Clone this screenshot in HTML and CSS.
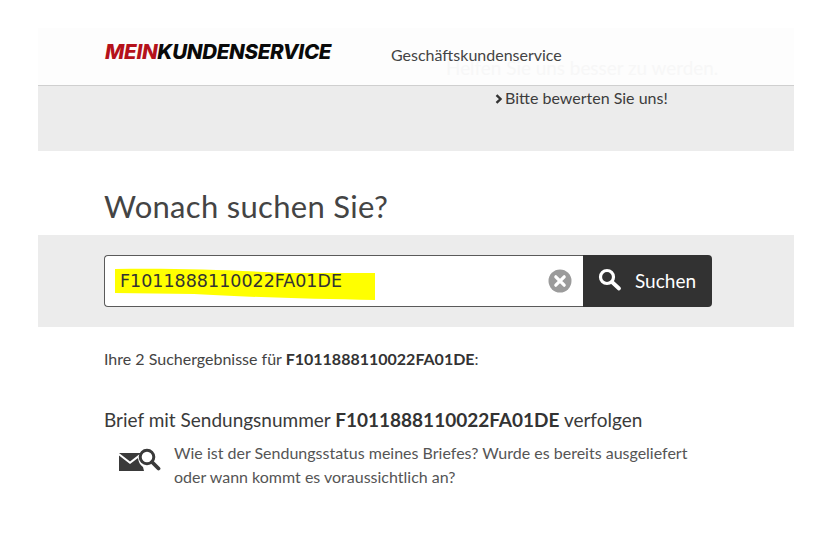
FILE: index.html
```html
<!DOCTYPE html>
<html lang="de">
<head>
<meta charset="utf-8">
<title>Mein Kundenservice</title>
<link rel="stylesheet" href="styles.css">
</head>
<body>
<div class="page">
  <header class="topbar">
    <div class="logo"><span class="logo-red">MEIN</span>KUNDENSERVICE</div>
    <a class="biz">Geschäftskundenservice</a>
    <span class="ghost">Helfen Sie uns besser zu werden.</span>
  </header>
  <section class="rate">
    <svg class="chev" width="8" height="10" viewBox="0 0 8 10"><path d="M1.5 1.200 L5.500 5 L1.500 8.800" fill="none" stroke="#333" stroke-width="2.400"/></svg>
    <span>Bitte bewerten Sie uns!</span>
  </section>
  <h1 class="title">Wonach suchen Sie?</h1>
  <section class="band">
    <div class="search">
      <div class="field">
        <svg class="marker" width="262" height="32" viewBox="0 0 262 32"><path d="M1 1 C60 0 120 2 170 5 L261 5 L261 32 C200 31 130 29 80 26 L1 25 Z" fill="#ffff00"/></svg>
        <span class="query">F1011888110022FA01DE</span>
        <svg class="clear" width="24" height="24" viewBox="0 0 24 24"><circle cx="12" cy="12" r="11.500" fill="#9b9b9b"/><path d="M7.800 7.800 L16.200 16.200 M16.200 7.800 L7.800 16.200" stroke="#fff" stroke-width="3.200" stroke-linecap="round"/></svg>
      </div>
      <div class="btn">
        <svg width="24" height="24" viewBox="0 0 24 24"><circle cx="9" cy="9" r="6.500" fill="none" stroke="#fff" stroke-width="3.200"/><path d="M14 14 L21 20.500" stroke="#fff" stroke-width="3.800" stroke-linecap="round"/></svg>
        <span>Suchen</span>
      </div>
    </div>
  </section>
  <main class="results">
    <p class="count">Ihre 2 Suchergebnisse für <b>F1011888110022FA01DE</b>:</p>
    <h2 class="res-title">Brief mit Sendungsnummer <b>F1011888110022FA01DE</b> verfolgen</h2>
    <div class="res-body">
      <svg class="res-icon" width="42" height="24" viewBox="0 0 42 24"><path d="M0 5 H22 L11 13.500 Z M0 7.500 L11 16 L19 10 C19.500 14 21 17 24 19 L25 23 H0 Z" fill="#3a3a3a"/><circle cx="28" cy="9" r="6.800" fill="none" stroke="#3a3a3a" stroke-width="3"/><path d="M33 14 L39.500 20.500" stroke="#3a3a3a" stroke-width="3.800" stroke-linecap="round"/></svg>
      <p class="res-text">Wie ist der Sendungsstatus meines Briefes? Wurde es bereits ausgeliefert<br>oder wann kommt es voraussichtlich an?</p>
    </div>
  </main>
</div>
</body>
</html>
```
FILE: styles.css
```css
* { box-sizing: border-box; }
html, body { margin: 0; padding: 0; background: #fff; overflow: hidden; }
body { font-family: "Lato", "Noto Sans", sans-serif; color: #3c3c3c; }
.page { width: 756px; margin-left: 38px; padding-top: 28px; }
.topbar { position: relative; height: 58px; border-bottom: 1px solid #cfcfcf; display: flex; padding-left: 67px; background: #fdfdfd; }
.logo { font-family: "Inter", "Roboto", sans-serif; font-weight: 800; font-style: italic; font-size: 20.500px; line-height: 26px; margin-top: 11px; color: #0a0a0a; letter-spacing: -0.3px; width: 286px; white-space: nowrap; }
.logo-red { color: #b5121b; }
.biz { font-size: 16px; line-height: 20px; margin-top: 17px; color: #444; }
.ghost { position: absolute; left: 408px; top: 28px; font-size: 18.900px; line-height: 24px; color: #f7f7f7; }
.rate { height: 65px; background: #ececec; padding: 1px 0 0 457px; display: flex; align-items: flex-start; gap: 2px; font-size: 16px; line-height: 22px; color: #3c3c3c; }
.chev { margin-top: 7px; }
.title { font-size: 31px; font-weight: 400; line-height: 40px; margin: 35px 0 0; padding-left: 66px; height: 49px; color: #444; letter-spacing: 0.3px; }
.band { height: 92px; background: #ececec; padding: 20px 0 0 66px; }
.search { display: flex; width: 608px; height: 52px; }
.field { position: relative; flex: 1; background: #fff; border: 1px solid #5a5a5a; border-right: 0; border-radius: 4px 0 0 4px; display: flex; align-items: center; padding: 0 11px 0 15px; justify-content: space-between; }
.marker { position: absolute; left: 9px; top: 12px; }
.query { position: relative; font-family: "DejaVu Sans", sans-serif; font-size: 17.500px; color: #333; }
.clear { position: relative; }
.btn { width: 129px; background: #323232; border-radius: 0 4px 4px 0; color: #fff; display: flex; align-items: center; gap: 13px; padding: 0 0 2px 15px; font-size: 19px; }
.results { padding-left: 66px; }
.count { margin: 22px 0 0; font-size: 16px; line-height: 20px; color: #444; }
.count b, .res-title b { font-weight: 700; color: #333; }
.res-title { margin: 39px 0 0; font-size: 19px; font-weight: 400; line-height: 24px; color: #3a3a3a; }
.res-body { display: flex; margin-top: 9px; }
.res-icon { margin: 7px 0 0 15px; flex: none; }
.res-text { margin: 0 0 0 13px; font-size: 16px; line-height: 24px; color: #555; }
```
